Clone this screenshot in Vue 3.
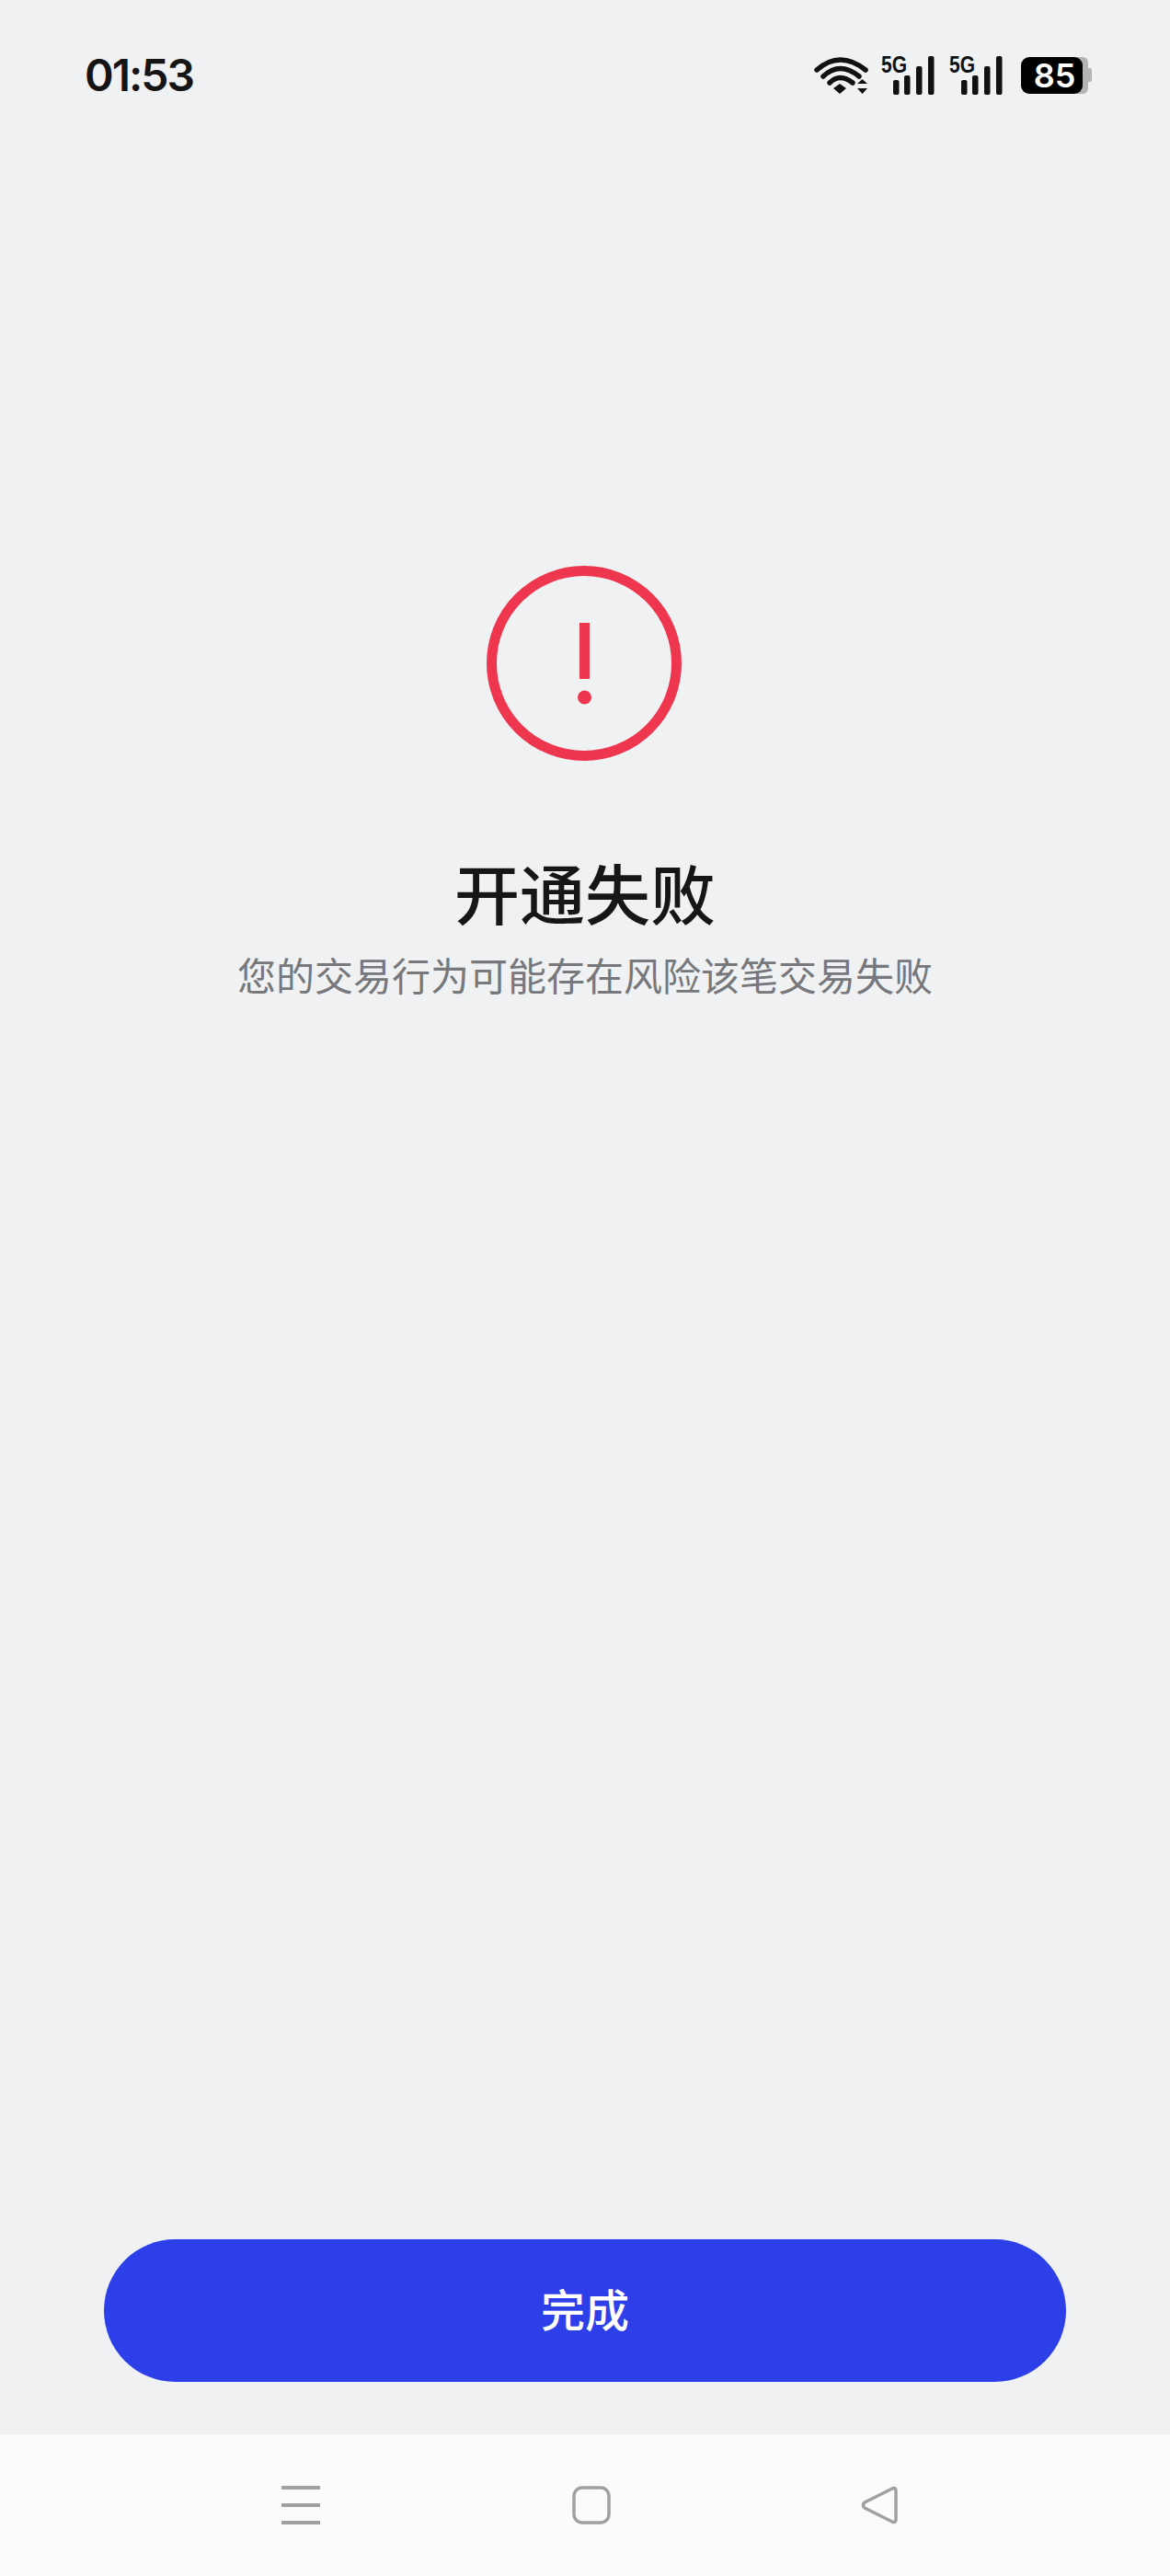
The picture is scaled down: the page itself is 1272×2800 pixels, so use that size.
<template>
  <div class="page">
    <div class="status-bar">
      <span class="time">01:53</span>
      <div class="status-icons">
        <svg class="wifi" width="60" height="44" viewBox="0 0 60 44">
          <path d="M4 16 Q29 -6 57 16" class="arc" />
          <path d="M11 23 Q29 6 50 23" class="arc" />
          <path d="M18 30 Q29 19 43 30" class="arc" />
          <path d="M22 36 L29 31 L36 36 L29 42 Z" fill="#111" />
          <path d="M48 31 L53.500 26 L59 31 Z M48 36 L59 36 L53.500 42 Z" fill="#111" />
        </svg>
        <svg v-for="n in 2" :key="n" class="signal" width="58" height="56" viewBox="0 -6 58 56">
          <text x="0" y="18.500" class="five-g" textLength="28" lengthAdjust="spacingAndGlyphs">5G</text>
          <rect x="13" y="27" width="6.500" height="16" rx="2" fill="#111" />
          <rect x="25" y="22" width="6.500" height="21" rx="2" fill="#111" />
          <rect x="38" y="12" width="6.500" height="31" rx="2" fill="#111" />
          <rect x="51" y="1" width="6.500" height="42" rx="2" fill="#111" />
        </svg>
        <div class="battery">
          <svg width="78" height="40" viewBox="0 0 78 40">
            <path d="M60 0 H67 Q73 0 73 7 V12 H75 Q77 12 77 15 V24 Q77 27 75 27 H73 V33 Q73 40 67 40 H60 Z" fill="#b4b4b4" />
            <rect x="0" y="0" width="67" height="40" rx="9" fill="#000" />
          </svg>
          <span class="battery-text">85</span>
        </div>
      </div>
    </div>

    <div class="result">
      <svg class="alert" width="212" height="212" viewBox="0 0 212 212">
        <circle cx="106" cy="106" r="100.500" fill="none" stroke="#ee364f" stroke-width="11" />
        <rect x="101" y="62" width="11" height="61" fill="#ee364f" />
        <circle cx="106.500" cy="143" r="7.500" fill="#ee364f" />
      </svg>
      <h1 class="title">开通失败</h1>
      <p class="desc">您的交易行为可能存在风险该笔交易失败</p>
    </div>

    <button class="done">完成</button>

    <div class="nav-bar">
      <svg width="42" height="44" viewBox="0 0 42 44">
        <path d="M0 3 H42 M0 22 H42 M0 41 H42" stroke="#a0a0a0" stroke-width="4" fill="none" />
      </svg>
      <svg class="home" width="42" height="42" viewBox="0 0 42 42">
        <rect x="2" y="2" width="38" height="38" rx="9" fill="none" stroke="#a0a0a0" stroke-width="3.500" />
      </svg>
      <svg width="40" height="42" viewBox="0 0 40 42">
        <path d="M33 3.500 Q38 0.500 38 6 V36 Q38 41.500 33 38.500 L4 24 Q1 21 4 18 Z" fill="none" stroke="#a0a0a0" stroke-width="3.500" stroke-linejoin="round" />
      </svg>
    </div>
  </div>
</template>

<script setup>
</script>

<style>
html, body {
  margin: 0;
  background: #f0f1f3;
}
</style>

<style scoped>
.page {
  height: 2800px;
  display: flex;
  flex-direction: column;
  background: #f0f1f3;
  font-family: "Noto Sans CJK SC", "Noto Sans", sans-serif;
}

.status-bar {
  height: 163px;
  flex-shrink: 0;
  display: flex;
  align-items: center;
  justify-content: space-between;
  padding: 0 84px 0 92px;
}

.time {
  font-family: Inter, sans-serif;
  font-size: 48px;
  font-weight: 600;
  letter-spacing: -2px;
  color: #151515;
}

.status-icons {
  display: flex;
  align-items: center;
}

.signal {
  margin-left: 14px;
}

.signal + .signal {
  margin-left: 16px;
}

.five-g {
  font-family: "Liberation Sans", sans-serif;
  font-size: 26px;
  font-weight: 700;
  fill: #111;
}

.arc {
  fill: none;
  stroke: #111;
  stroke-width: 5.500;
  stroke-linecap: round;
}

.battery {
  position: relative;
  width: 78px;
  height: 40px;
  margin-left: 20px;
}

.battery svg {
  display: block;
}

.battery-text {
  position: absolute;
  left: 3px;
  top: 0;
  width: 67px;
  text-align: center;
  line-height: 40px;
  font-family: Inter, sans-serif;
  font-size: 36px;
  font-weight: 600;
  color: #fff;
}

.result {
  flex: 1;
  display: flex;
  flex-direction: column;
  align-items: center;
  padding-top: 452px;
}

.alert {
  margin-right: 2px;
}

.title {
  margin: 96px 0 16px;
  font-size: 71px;
  line-height: 90px;
  font-weight: 500;
  color: #161616;
}

.desc {
  margin: 0;
  font-size: 42px;
  line-height: 60px;
  color: #77787b;
}

.done {
  flex-shrink: 0;
  margin: 0 113px 57px;
  height: 155px;
  padding: 0 0 8px;
  border: none;
  border-radius: 78px;
  background: #2c3fe8;
  color: #fff;
  font-family: inherit;
  font-size: 48px;
  font-weight: 500;
}

.nav-bar {
  height: 154px;
  flex-shrink: 0;
  display: flex;
  align-items: center;
  justify-content: space-between;
  padding: 0 296px 0 306px;
  background: #fbfbfb;
}

.home {
  margin-left: 2px;
}
</style>
